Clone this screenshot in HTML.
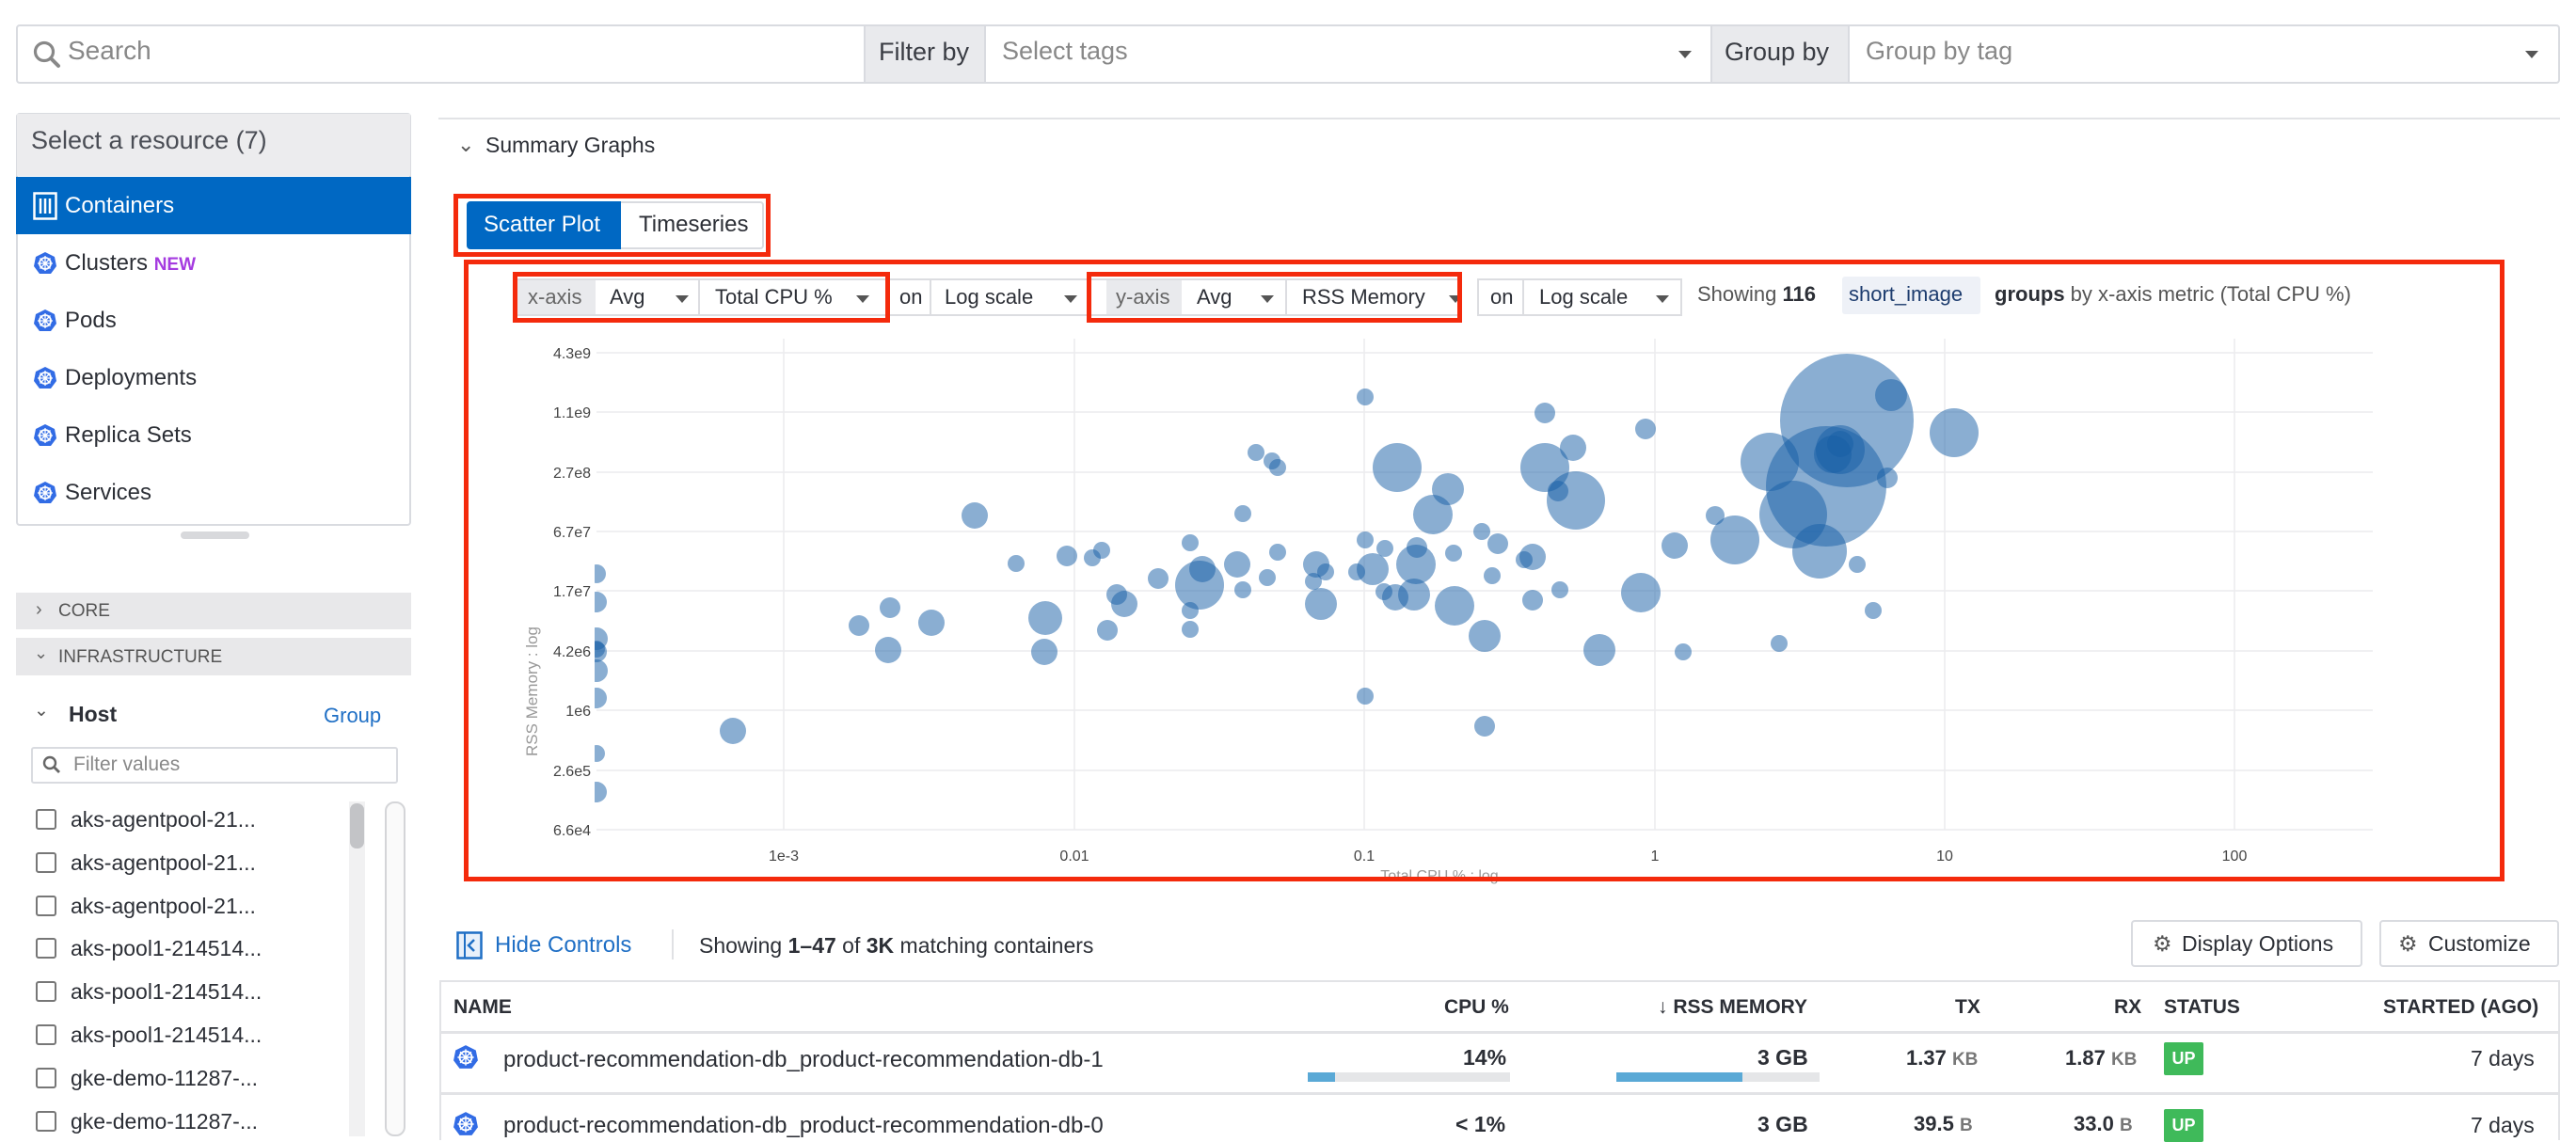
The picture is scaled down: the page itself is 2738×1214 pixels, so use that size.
<!DOCTYPE html>
<html><head><meta charset="utf-8">
<style>
*{box-sizing:border-box;margin:0;padding:0}
body{width:2738px;height:1208px;overflow:hidden;background:#fff;font-family:"Liberation Sans",sans-serif;color:#2c2f36;position:relative}
.a{position:absolute}
.t{position:absolute;white-space:nowrap}
.box{position:absolute;border:2px solid #d9dbe0;border-radius:4px;background:#fff}
.gray{background:#e9eaed}
.red{position:absolute;border:5px solid #f42a0c;}
.ctl{position:absolute;top:296px;height:40px;border:2px solid #dcdde1;background:#fff;font-size:22px;line-height:36px;padding-left:14px;color:#2c2f36}
.arr{position:absolute;width:0;height:0;border-left:7px solid transparent;border-right:7px solid transparent;border-top:8px solid #555}
.menu{position:absolute;left:17px;width:420px;height:61px;font-size:24px;line-height:61px;padding-left:52px}
.k8s{position:absolute;left:18px;top:18px;width:26px;height:26px}
.cb{position:absolute;left:38px;width:22px;height:22px;border:2px solid #777;border-radius:3px;background:#fff}
.cbl{position:absolute;left:75px;font-size:23px}
.th{position:absolute;top:1059px;font-size:21px;font-weight:bold;color:#2c2f36}
</style></head><body>

<!-- top search bar -->
<div class="box" style="left:17px;top:26px;width:2704px;height:63px;"></div>
<svg class="a" style="left:34px;top:42px" width="32" height="32" viewBox="0 0 32 32"><circle cx="13" cy="13" r="9.5" fill="none" stroke="#888" stroke-width="3.2"/><line x1="20" y1="20" x2="28" y2="28" stroke="#888" stroke-width="4" stroke-linecap="round"/></svg>
<div class="t" style="left:72px;top:38px;font-size:28px;color:#888">Search</div>
<div class="a gray" style="left:918px;top:28px;width:130px;height:59px;border-left:2px solid #d9dbe0;border-right:2px solid #d9dbe0"></div>
<div class="t" style="left:934px;top:40px;font-size:27px;color:#3a3d44">Filter by</div>
<div class="t" style="left:1065px;top:39px;font-size:27px;color:#888">Select tags</div>
<div class="arr" style="left:1784px;top:54px"></div>
<div class="a gray" style="left:1818px;top:28px;width:148px;height:59px;border-left:2px solid #d9dbe0;border-right:2px solid #d9dbe0"></div>
<div class="t" style="left:1833px;top:40px;font-size:27px;color:#3a3d44">Group by</div>
<div class="t" style="left:1983px;top:39px;font-size:27px;color:#888">Group by tag</div>
<div class="arr" style="left:2684px;top:54px"></div>

<!-- left resource panel -->
<div class="box" style="left:17px;top:120px;width:420px;height:439px;border-radius:4px"></div>
<div class="a" style="left:18px;top:121px;width:418px;height:66px;background:#ececee"></div>
<div class="t" style="left:33px;top:134px;font-size:27px;color:#4a4d55">Select a resource (7)</div>
<div class="menu" style="top:188px;background:#0068c3;color:#fff">Containers
<svg class="a" style="left:18px;top:16px" width="26" height="30" viewBox="0 0 26 30"><rect x="1.5" y="1.5" width="23" height="27" fill="none" stroke="#fff" stroke-width="2.5"/><line x1="8" y1="7" x2="8" y2="23" stroke="#fff" stroke-width="2.5"/><line x1="13" y1="7" x2="13" y2="23" stroke="#fff" stroke-width="2.5"/><line x1="18" y1="7" x2="18" y2="23" stroke="#fff" stroke-width="2.5"/></svg></div>
<div class="menu" style="top:249px">Clusters <span style="color:#a53be0;font-weight:bold;font-size:19px">NEW</span><svg class="k8s" viewBox="0 0 26 26"><polygon points="13,1 23,6 25,16 19,24 7,24 1,16 3,6" fill="#326ce5"/><circle cx="13" cy="13" r="6" fill="none" stroke="#fff" stroke-width="1.8"/><path d="M13 5v16M5 13h16M7.5 7.5l11 11M18.5 7.5l-11 11" stroke="#fff" stroke-width="1.3"/></svg></div>
<div class="menu" style="top:310px">Pods<svg class="k8s" viewBox="0 0 26 26"><polygon points="13,1 23,6 25,16 19,24 7,24 1,16 3,6" fill="#326ce5"/><circle cx="13" cy="13" r="6" fill="none" stroke="#fff" stroke-width="1.8"/><path d="M13 5v16M5 13h16M7.5 7.5l11 11M18.5 7.5l-11 11" stroke="#fff" stroke-width="1.3"/></svg></div>
<div class="menu" style="top:371px">Deployments<svg class="k8s" viewBox="0 0 26 26"><polygon points="13,1 23,6 25,16 19,24 7,24 1,16 3,6" fill="#326ce5"/><circle cx="13" cy="13" r="6" fill="none" stroke="#fff" stroke-width="1.8"/><path d="M13 5v16M5 13h16M7.5 7.5l11 11M18.5 7.5l-11 11" stroke="#fff" stroke-width="1.3"/></svg></div>
<div class="menu" style="top:432px">Replica Sets<svg class="k8s" viewBox="0 0 26 26"><polygon points="13,1 23,6 25,16 19,24 7,24 1,16 3,6" fill="#326ce5"/><circle cx="13" cy="13" r="6" fill="none" stroke="#fff" stroke-width="1.8"/><path d="M13 5v16M5 13h16M7.5 7.5l11 11M18.5 7.5l-11 11" stroke="#fff" stroke-width="1.3"/></svg></div>
<div class="menu" style="top:493px">Services<svg class="k8s" viewBox="0 0 26 26"><polygon points="13,1 23,6 25,16 19,24 7,24 1,16 3,6" fill="#326ce5"/><circle cx="13" cy="13" r="6" fill="none" stroke="#fff" stroke-width="1.8"/><path d="M13 5v16M5 13h16M7.5 7.5l11 11M18.5 7.5l-11 11" stroke="#fff" stroke-width="1.3"/></svg></div>
<div class="a" style="left:192px;top:565px;width:73px;height:8px;border-radius:4px;background:#d8d9dc"></div>

<!-- facets -->
<div class="a" style="left:17px;top:630px;width:420px;height:39px;background:#e8e8ea"></div>
<div class="t" style="left:38px;top:637px;font-size:20px;color:#666">›</div>
<div class="t" style="left:62px;top:639px;font-size:19px;color:#555">CORE</div>
<div class="a" style="left:17px;top:678px;width:420px;height:40px;background:#e8e8ea"></div>
<div class="t" style="left:36px;top:684px;font-size:18px;color:#666">⌄</div>
<div class="t" style="left:62px;top:688px;font-size:19px;color:#555">INFRASTRUCTURE</div>
<div class="t" style="left:36px;top:744px;font-size:19px;color:#555">⌄</div>
<div class="t" style="left:73px;top:746px;font-size:23px;font-weight:bold">Host</div>
<div class="t" style="left:344px;top:748px;font-size:22px;color:#1f6fc5">Group</div>
<div class="box" style="left:33px;top:794px;width:390px;height:39px;border-radius:3px"></div>
<svg class="a" style="left:44px;top:802px" width="22" height="22" viewBox="0 0 22 22"><circle cx="9" cy="9" r="6" fill="none" stroke="#666" stroke-width="2.4"/><line x1="13.5" y1="13.5" x2="19" y2="19" stroke="#666" stroke-width="2.8"/></svg>
<div class="t" style="left:78px;top:801px;font-size:21px;color:#888">Filter values</div>

<div class="cb" style="top:860px"></div><div class="t cbl" style="top:858px">aks-agentpool-21...</div>
<div class="cb" style="top:906px"></div><div class="t cbl" style="top:904px">aks-agentpool-21...</div>
<div class="cb" style="top:952px"></div><div class="t cbl" style="top:950px">aks-agentpool-21...</div>
<div class="cb" style="top:997px"></div><div class="t cbl" style="top:995px">aks-pool1-214514...</div>
<div class="cb" style="top:1043px"></div><div class="t cbl" style="top:1041px">aks-pool1-214514...</div>
<div class="cb" style="top:1089px"></div><div class="t cbl" style="top:1087px">aks-pool1-214514...</div>
<div class="cb" style="top:1135px"></div><div class="t cbl" style="top:1133px">gke-demo-11287-...</div>
<div class="cb" style="top:1181px"></div><div class="t cbl" style="top:1179px">gke-demo-11287-...</div>
<div class="a" style="left:371px;top:852px;width:17px;height:356px;background:#f1f1f2"></div>
<div class="a" style="left:372px;top:854px;width:15px;height:48px;border-radius:7px;background:#c3c4c7"></div>
<div class="a" style="left:409px;top:852px;width:22px;height:356px;border:2px solid #d4d5d8;border-radius:10px;background:#fafafa"></div>

<!-- main -->
<div class="a" style="left:466px;top:125px;width:2255px;height:2px;background:#e2e3e6"></div>
<div class="t" style="left:486px;top:141px;font-size:22px;color:#555">⌄</div>
<div class="t" style="left:516px;top:141px;font-size:23px">Summary Graphs</div>

<div class="a" style="left:496px;top:214px;width:316px;height:51px;border:2px solid #d9dbe0;border-radius:4px;background:#fff"></div>
<div class="a" style="left:496px;top:214px;width:164px;height:51px;border-radius:4px 0 0 4px;background:#0068c3"></div>
<div class="t" style="left:514px;top:225px;font-size:24px;color:#fff">Scatter Plot</div>
<div class="t" style="left:679px;top:225px;font-size:24px">Timeseries</div>

<!-- controls -->
<div class="ctl" style="left:547px;width:398px;padding:0"></div>
<div class="a gray" style="left:549px;top:298px;width:84px;height:36px"></div>
<div class="t" style="left:561px;top:303px;font-size:22px;color:#666">x-axis</div>
<div class="t" style="left:648px;top:303px;font-size:22px">Avg</div><div class="arr" style="left:718px;top:314px"></div>
<div class="a" style="left:742px;top:298px;width:2px;height:36px;background:#dcdde1"></div>
<div class="t" style="left:760px;top:303px;font-size:22px">Total CPU %</div><div class="arr" style="left:910px;top:314px"></div>
<div class="ctl" style="left:943px;width:217px;padding-left:11px">on</div>
<div class="a" style="left:988px;top:298px;width:2px;height:36px;background:#dcdde1"></div>
<div class="t" style="left:1004px;top:303px;font-size:22px">Log scale</div><div class="arr" style="left:1131px;top:314px"></div>

<div class="ctl" style="left:1156px;width:397px;padding:0"></div>
<div class="a gray" style="left:1176px;top:298px;width:80px;height:36px"></div>
<div class="t" style="left:1186px;top:303px;font-size:22px;color:#666">y-axis</div>
<div class="t" style="left:1272px;top:303px;font-size:22px">Avg</div><div class="arr" style="left:1340px;top:314px"></div>
<div class="a" style="left:1366px;top:298px;width:2px;height:36px;background:#dcdde1"></div>
<div class="t" style="left:1384px;top:303px;font-size:22px">RSS Memory</div><div class="arr" style="left:1540px;top:314px"></div>
<div class="ctl" style="left:1570px;width:218px;padding-left:12px">on</div>
<div class="a" style="left:1618px;top:298px;width:2px;height:36px;background:#dcdde1"></div>
<div class="t" style="left:1636px;top:303px;font-size:22px">Log scale</div><div class="arr" style="left:1760px;top:314px"></div>

<div class="t" style="left:1804px;top:300px;font-size:22px;color:#555">Showing <b style="color:#2c2f36">116</b></div>
<div class="a" style="left:1958px;top:294px;width:147px;height:40px;background:#eef1f7;border-radius:3px"></div>
<div class="t" style="left:1965px;top:300px;font-size:22px;color:#1d3c6e">short_image</div>
<div class="t" style="left:2120px;top:300px;font-size:22px;color:#555"><b style="color:#2c2f36">groups</b> by x-axis metric (Total CPU %)</div>

<!-- chart -->
<svg class="a" style="left:0;top:0" width="2738" height="1208">
<defs><clipPath id="pc"><rect x="632" y="340" width="1900" height="560"/></clipPath></defs>
<g stroke="#ececee" stroke-width="1.5">
<line x1="634" y1="375" x2="2522" y2="375"/><line x1="634" y1="438" x2="2522" y2="438"/><line x1="634" y1="502" x2="2522" y2="502"/><line x1="634" y1="565" x2="2522" y2="565"/><line x1="634" y1="628" x2="2522" y2="628"/><line x1="634" y1="692" x2="2522" y2="692"/><line x1="634" y1="755" x2="2522" y2="755"/><line x1="634" y1="819" x2="2522" y2="819"/><line x1="634" y1="882" x2="2522" y2="882"/>
<line x1="833" y1="360" x2="833" y2="882"/><line x1="1142" y1="360" x2="1142" y2="882"/><line x1="1450" y1="360" x2="1450" y2="882"/><line x1="1759" y1="360" x2="1759" y2="882"/><line x1="2067" y1="360" x2="2067" y2="882"/><line x1="2375" y1="360" x2="2375" y2="882"/>
</g>
<g font-family="Liberation Sans, sans-serif" font-size="16" fill="#444" text-anchor="end">
<text x="628" y="381">4.3e9</text><text x="628" y="444">1.1e9</text><text x="628" y="508">2.7e8</text><text x="628" y="571">6.7e7</text><text x="628" y="634">1.7e7</text><text x="628" y="698">4.2e6</text><text x="628" y="761">1e6</text><text x="628" y="825">2.6e5</text><text x="628" y="888">6.6e4</text>
</g>
<g font-family="Liberation Sans, sans-serif" font-size="16" fill="#444" text-anchor="middle">
<text x="833" y="915">1e-3</text><text x="1142" y="915">0.01</text><text x="1450" y="915">0.1</text><text x="1759" y="915">1</text><text x="2067" y="915">10</text><text x="2375" y="915">100</text>
<text x="1530" y="936" fill="#999" font-size="16">Total CPU % : log</text>
<text x="0" y="0" fill="#999" font-size="17" transform="translate(571,735) rotate(-90)">RSS Memory : log</text>
</g>
<g clip-path="url(#pc)" fill="rgb(22,94,165)" fill-opacity="0.5">
<circle cx="1963" cy="447" r="71"/><circle cx="2010" cy="420" r="17"/><circle cx="2077" cy="460" r="26"/><circle cx="1956" cy="478" r="26"/><circle cx="1948" cy="483" r="20"/><circle cx="1956" cy="472" r="14"/><circle cx="1881" cy="491" r="31"/><circle cx="1941" cy="517" r="64"/><circle cx="1906" cy="547" r="36"/><circle cx="1934" cy="586" r="29"/><circle cx="2006" cy="508" r="11"/><circle cx="1974" cy="600" r="9"/><circle cx="1991" cy="649" r="9"/><circle cx="1891" cy="684" r="9"/><circle cx="1844" cy="574" r="26"/><circle cx="1780" cy="580" r="14"/><circle cx="1823" cy="548" r="10"/><circle cx="1744" cy="630" r="21"/><circle cx="1749" cy="456" r="11"/><circle cx="1642" cy="439" r="11"/><circle cx="1672" cy="476" r="14"/><circle cx="1642" cy="497" r="26"/><circle cx="1675" cy="532" r="31"/><circle cx="1656" cy="522" r="11"/><circle cx="1539" cy="520" r="17"/><circle cx="1485" cy="497" r="26"/><circle cx="1523" cy="547" r="21"/><circle cx="1451" cy="422" r="9"/><circle cx="1335" cy="481" r="9"/><circle cx="1352" cy="490" r="9"/><circle cx="1358" cy="497" r="9"/><circle cx="1321" cy="546" r="9"/><circle cx="1036" cy="548" r="14"/><circle cx="1592" cy="578" r="11"/><circle cx="1575" cy="565" r="9"/><circle cx="1629" cy="592" r="14"/><circle cx="1620" cy="595" r="9"/><circle cx="1545" cy="588" r="9"/><circle cx="1506" cy="582" r="11"/><circle cx="1472" cy="583" r="9"/><circle cx="1451" cy="574" r="9"/><circle cx="1358" cy="587" r="9"/><circle cx="1505" cy="600" r="21"/><circle cx="1459" cy="605" r="17"/><circle cx="1503" cy="632" r="17"/><circle cx="1546" cy="644" r="21"/><circle cx="1483" cy="635" r="14"/><circle cx="1471" cy="629" r="9"/><circle cx="1442" cy="608" r="9"/><circle cx="1399" cy="600" r="14"/><circle cx="1404" cy="642" r="17"/><circle cx="1396" cy="618" r="9"/><circle cx="1409" cy="608" r="9"/><circle cx="1315" cy="600" r="14"/><circle cx="1347" cy="614" r="9"/><circle cx="1321" cy="627" r="9"/><circle cx="1278" cy="605" r="14"/><circle cx="1275" cy="622" r="26"/><circle cx="1231" cy="615" r="11"/><circle cx="1265" cy="577" r="9"/><circle cx="1265" cy="649" r="9"/><circle cx="1265" cy="669" r="9"/><circle cx="1195" cy="642" r="14"/><circle cx="1187" cy="632" r="11"/><circle cx="1177" cy="670" r="11"/><circle cx="1171" cy="585" r="9"/><circle cx="1161" cy="593" r="9"/><circle cx="1134" cy="591" r="11"/><circle cx="1080" cy="599" r="9"/><circle cx="1111" cy="657" r="18"/><circle cx="1110" cy="693" r="14"/><circle cx="990" cy="662" r="14"/><circle cx="946" cy="646" r="11"/><circle cx="913" cy="665" r="11"/><circle cx="944" cy="691" r="14"/><circle cx="779" cy="777" r="14"/><circle cx="1451" cy="740" r="9"/><circle cx="1578" cy="772" r="11"/><circle cx="1578" cy="676" r="17"/><circle cx="1700" cy="691" r="17"/><circle cx="1789" cy="693" r="9"/><circle cx="1658" cy="627" r="9"/><circle cx="1629" cy="638" r="11"/><circle cx="1586" cy="612" r="9"/>
<circle cx="634" cy="610" r="10"/><circle cx="634" cy="640" r="11"/><circle cx="634" cy="679" r="12"/><circle cx="634" cy="693" r="11"/><circle cx="634" cy="713" r="12"/><circle cx="634" cy="742" r="11"/><circle cx="634" cy="801" r="9"/><circle cx="634" cy="842" r="11"/><circle cx="634" cy="690" r="9"/>
</g>
</svg>

<!-- red annotation boxes -->
<div class="red" style="left:482px;top:206px;width:337px;height:67px"></div>
<div class="red" style="left:493px;top:276px;width:2169px;height:661px"></div>
<div class="red" style="left:545px;top:289px;width:401px;height:54px"></div>
<div class="red" style="left:1155px;top:289px;width:399px;height:54px"></div>

<!-- table controls -->
<svg class="a" style="left:485px;top:990px" width="28" height="30" viewBox="0 0 28 30"><rect x="1.5" y="1.5" width="25" height="27" fill="#e8f0fa" stroke="#1f6fc5" stroke-width="2.5"/><line x1="9" y1="2" x2="9" y2="28" stroke="#1f6fc5" stroke-width="2"/><path d="M19 9l-6 6 6 6" fill="none" stroke="#1f6fc5" stroke-width="2.5"/></svg>
<div class="t" style="left:526px;top:991px;font-size:24px;color:#1f6fc5">Hide Controls</div>
<div class="a" style="left:714px;top:988px;width:2px;height:32px;background:#e0e1e4"></div>
<div class="t" style="left:743px;top:992px;font-size:23px">Showing <b>1–47</b> of <b>3K</b> matching containers</div>
<div class="box" style="left:2265px;top:978px;width:246px;height:50px"></div>
<div class="t" style="left:2288px;top:990px;font-size:23px;color:#555">⚙</div>
<div class="t" style="left:2319px;top:990px;font-size:23px">Display Options</div>
<div class="box" style="left:2529px;top:978px;width:191px;height:50px"></div>
<div class="t" style="left:2549px;top:990px;font-size:23px;color:#555">⚙</div>
<div class="t" style="left:2581px;top:990px;font-size:23px">Customize</div>

<!-- table -->
<div class="a" style="left:467px;top:1042px;width:2254px;height:170px;border:2px solid #e2e3e6;border-bottom:none"></div>
<div class="a" style="left:467px;top:1096px;width:2254px;height:3px;background:#e2e3e6"></div>
<div class="a" style="left:467px;top:1161px;width:2254px;height:3px;background:#e2e3e6"></div>
<div class="th" style="left:482px">NAME</div>
<div class="th" style="left:1535px">CPU %</div>
<div class="th" style="left:1762px">↓ RSS MEMORY</div>
<div class="th" style="left:2078px">TX</div>
<div class="th" style="left:2247px">RX</div>
<div class="th" style="left:2300px">STATUS</div>
<div class="th" style="left:2533px">STARTED (AGO)</div>

<svg class="a" style="left:481px;top:1110px" width="28" height="28" viewBox="0 0 26 26"><polygon points="13,1 23,6 25,16 19,24 7,24 1,16 3,6" fill="#326ce5"/><circle cx="13" cy="13" r="6" fill="none" stroke="#fff" stroke-width="1.8"/><path d="M13 5v16M5 13h16M7.5 7.5l11 11M18.5 7.5l-11 11" stroke="#fff" stroke-width="1.3"/></svg>
<div class="t" style="left:535px;top:1113px;font-size:24px">product-recommendation-db_product-recommendation-db-1</div>
<div class="t" style="left:1555px;top:1111px;font-size:23px;font-weight:bold">14%</div>
<div class="a" style="left:1390px;top:1140px;width:215px;height:10px;background:#e5e6e8"></div>
<div class="a" style="left:1390px;top:1140px;width:29px;height:10px;background:#5aa9d6"></div>
<div class="t" style="left:1868px;top:1111px;font-size:23px;font-weight:bold">3 GB</div>
<div class="a" style="left:1718px;top:1140px;width:216px;height:10px;background:#e5e6e8"></div>
<div class="a" style="left:1718px;top:1140px;width:134px;height:10px;background:#5aa9d6"></div>
<div class="t" style="left:2026px;top:1112px;font-size:22px;font-weight:bold">1.37 <span style="color:#777;font-size:19px">KB</span></div>
<div class="t" style="left:2195px;top:1112px;font-size:22px;font-weight:bold">1.87 <span style="color:#777;font-size:19px">KB</span></div>
<div class="a" style="left:2300px;top:1108px;width:42px;height:35px;background:#3fba5a;border-radius:2px;color:#fff;font-size:18px;font-weight:bold;text-align:center;line-height:35px">UP</div>
<div class="t" style="left:2626px;top:1112px;font-size:23px">7 days</div>

<svg class="a" style="left:481px;top:1181px" width="28" height="28" viewBox="0 0 26 26"><polygon points="13,1 23,6 25,16 19,24 7,24 1,16 3,6" fill="#326ce5"/><circle cx="13" cy="13" r="6" fill="none" stroke="#fff" stroke-width="1.8"/><path d="M13 5v16M5 13h16M7.5 7.5l11 11M18.5 7.5l-11 11" stroke="#fff" stroke-width="1.3"/></svg>
<div class="t" style="left:535px;top:1183px;font-size:24px">product-recommendation-db_product-recommendation-db-0</div>
<div class="t" style="left:1547px;top:1182px;font-size:23px;font-weight:bold">&lt; 1%</div>
<div class="t" style="left:1868px;top:1182px;font-size:23px;font-weight:bold">3 GB</div>
<div class="t" style="left:2034px;top:1182px;font-size:22px;font-weight:bold">39.5 <span style="color:#777;font-size:19px">B</span></div>
<div class="t" style="left:2204px;top:1182px;font-size:22px;font-weight:bold">33.0 <span style="color:#777;font-size:19px">B</span></div>
<div class="a" style="left:2300px;top:1179px;width:42px;height:35px;background:#3fba5a;border-radius:2px;color:#fff;font-size:18px;font-weight:bold;text-align:center;line-height:35px">UP</div>
<div class="t" style="left:2626px;top:1183px;font-size:23px">7 days</div>

</body></html>
